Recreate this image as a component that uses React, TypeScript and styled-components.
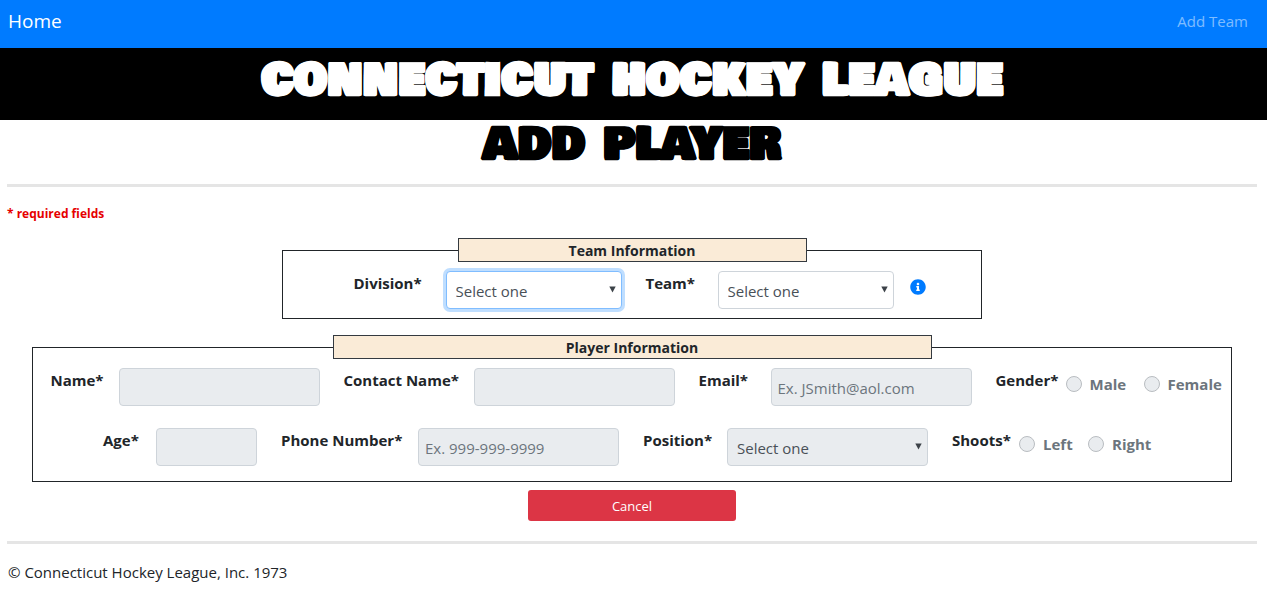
import React from "react";
import styled, { createGlobalStyle, css } from "styled-components";

const GlobalStyle = createGlobalStyle`
  *, *::before, *::after { box-sizing: border-box; }
  body {
    margin: 0;
    background: #fff;
    color: #212529;
    font-family: "Segoe UI", "Open Sans", "Noto Sans", sans-serif;
    font-size: 15px;
    line-height: 24px;
  }
`;

const NavBar = styled.nav`
  display: flex;
  align-items: center;
  justify-content: space-between;
  height: 48px;
  padding: 0 19px 6px 8px;
  background: #007bff;
`;

const Brand = styled.a`
  color: #fff;
  font-size: 19px;
  text-decoration: none;
`;

const NavLink = styled.a`
  color: rgba(255, 255, 255, 0.5);
  text-decoration: none;
`;

const slab = css`
  margin: 0;
  display: flex;
  justify-content: center;
  gap: 18px;
  font-family: "Bowlby One SC", "DejaVu Serif", serif;
  font-size: 42px;
  font-weight: 700;
  line-height: 48px;
  text-transform: uppercase;
  -webkit-text-stroke: 1px currentColor;
`;

const Banner = styled.header`
  height: 72px;
  padding: 8px 3px 0 0;
  background: #000;
  color: #fff;
`;

const SiteTitle = styled.h1`
  ${slab}
`;

const PageTitle = styled.h2`
  ${slab}
  height: 64px;
  color: #000;
`;

const Word = styled.span`
  &::first-letter {
    font-size: 43px;
  }
`;

const Main = styled.main`
  padding: 0 10px 0 7px;
`;

const Rule = styled.hr`
  height: 3px;
  margin: 0;
  border: 0;
  background: #e5e5e5;
`;

const Required = styled.p`
  margin: 17px 0 14px;
  color: #e60000;
  font-size: 12px;
  font-weight: 700;
  line-height: 20px;
`;

const Panel = styled.fieldset<{ $width: number }>`
  width: 100%;
  max-width: ${(p) => p.$width}px;
  min-width: 0;
  margin: 0 auto 16px;
  padding: 9px 0;
  border: 1px solid #212529;
`;

const PanelTitle = styled.legend`
  width: 50%;
  height: 24px;
  margin: 0 auto;
  padding: 0;
  border: 1px solid #343a40;
  background: #faebd7;
  font-size: 14px;
  font-weight: 700;
  line-height: 23px;
  text-align: center;
`;

const Row = styled.div<{ $before?: number; $after?: number }>`
  display: flex;
  justify-content: center;
  gap: 24px;
  padding-left: ${(p) => p.$before ?? 0}px;
  padding-right: ${(p) => p.$after ?? 0}px;
`;

const Rows = styled.div`
  display: grid;
  gap: 22px;
  padding-bottom: 6px;
`;

const Field = styled.div<{ $gap?: number }>`
  display: flex;
  gap: ${(p) => p.$gap ?? 16}px;
`;

const FieldLabel = styled.label<{ $width: number }>`
  width: ${(p) => p.$width}px;
  font-weight: 700;
  white-space: nowrap;
`;

const box = css`
  height: 38px;
  border: 1px solid #ced4da;
  border-radius: 4px;
  background: #fff;
  color: #495057;
  font: inherit;
  opacity: 1;
  &:disabled {
    background: #e9ecef;
  }
  &:focus {
    outline: 0;
    border-color: #80bdff;
    box-shadow: 0 0 0 3px #bfdeff;
  }
`;

const TextBox = styled.input<{ $width: number }>`
  ${box}
  width: ${(p) => p.$width}px;
  padding: 1px 6px 0;
  &::placeholder {
    color: #6c757d;
    opacity: 1;
  }
`;

const SelectWrap = styled.div<{ $width: number }>`
  position: relative;
  width: ${(p) => p.$width}px;
`;

const SelectBox = styled.select`
  ${box}
  display: block;
  width: 100%;
  padding: 1px 24px 0 9px;
  appearance: none;
`;

const Arrow = styled.svg`
  position: absolute;
  right: 6px;
  top: 15px;
  pointer-events: none;
`;

const InfoIcon = styled.svg`
  margin: 8px 31px 0 -8px;
`;

const Choices = styled.div<{ $gap: number }>`
  display: flex;
  gap: ${(p) => p.$gap}px;
  padding-top: 4px;
`;

const Choice = styled.label<{ $width: number }>`
  display: flex;
  align-items: center;
  gap: 8px;
  width: ${(p) => p.$width}px;
  height: 24px;
  color: #6c757d;
  font-weight: 700;
`;

const Radio = styled.input`
  appearance: none;
  flex: none;
  width: 16px;
  height: 16px;
  margin: 0;
  border: 1px solid #b9bdc1;
  border-radius: 50%;
  background: #e9ecef;
`;

const CancelButton = styled.button`
  display: block;
  width: 208px;
  height: 31px;
  margin: -8px auto 20px;
  padding: 0;
  border: 0;
  border-radius: 3px;
  background: #dc3545;
  color: #fff;
  font: inherit;
  font-size: 13px;
`;

const Footer = styled.footer`
  padding: 16px 1px 8px;
`;

function Words({ text }: { text: string }) {
  return (
    <>
      {text.split(" ").map((word) => (
        <Word key={word}>{word}</Word>
      ))}
    </>
  );
}

type SelectProps = { id: string; width: number; disabled?: boolean; autoFocus?: boolean };

function Select({ id, width, disabled, autoFocus }: SelectProps) {
  return (
    <SelectWrap $width={width}>
      <SelectBox id={id} disabled={disabled} autoFocus={autoFocus}>
        <option>Select one</option>
      </SelectBox>
      <Arrow width="7" height="7" viewBox="0 0 7 7" aria-hidden="true">
        <path d="M0.3 0.5h6.4L3.5 6.5z" fill="#3c4248" />
      </Arrow>
    </SelectWrap>
  );
}

type InputProps = { id: string; label: string; labelWidth: number; width?: number; placeholder?: string };

function TextField({ id, label, labelWidth, width = 201, placeholder }: InputProps) {
  return (
    <Field>
      <FieldLabel htmlFor={id} $width={labelWidth}>{label}</FieldLabel>
      <TextBox id={id} $width={width} placeholder={placeholder} disabled />
    </Field>
  );
}

export default function App() {
  return (
    <>
      <GlobalStyle />
      <NavBar>
        <Brand href="#home">Home</Brand>
        <NavLink href="#add-team">Add Team</NavLink>
      </NavBar>
      <Banner>
        <SiteTitle><Words text="Connecticut Hockey League" /></SiteTitle>
      </Banner>
      <Main>
        <PageTitle><Words text="Add Player" /></PageTitle>
        <Rule />
        <Required>* required fields</Required>
        <form>
          <Panel $width={700}>
            <PanelTitle>Team Information</PanelTitle>
            <Row $before={46}>
              <Field $gap={24}>
                <FieldLabel htmlFor="division" $width={68}>Division*</FieldLabel>
                <Select id="division" width={176} autoFocus />
              </Field>
              <Field $gap={24}>
                <FieldLabel htmlFor="team" $width={48}>Team*</FieldLabel>
                <Select id="team" width={176} />
              </Field>
              <InfoIcon width="16" height="16" viewBox="0 0 512 512" role="img" aria-label="Team help">
                <path
                  fill="#007bff"
                  d="M256 8C119.043 8 8 119.083 8 256c0 136.997 111.043 248 248 248s248-111.003 248-248C504 119.083 392.957 8 256 8zm0 110c23.196 0 42 18.804 42 42s-18.804 42-42 42-42-18.804-42-42 18.804-42 42-42zm56 254c0 6.627-5.373 12-12 12h-88c-6.627 0-12-5.373-12-12v-24c0-6.627 5.373-12 12-12h12v-64h-12c-6.627 0-12-5.373-12-12v-24c0-6.627 5.373-12 12-12h64c6.627 0 12 5.373 12 12v100h12c6.627 0 12 5.373 12 12v24z"
                />
              </InfoIcon>
            </Row>
          </Panel>
          <Panel $width={1200}>
            <PanelTitle>Player Information</PanelTitle>
            <Rows>
              <Row $before={8}>
                <TextField id="name" label="Name*" labelWidth={52} />
                <TextField id="contact" label="Contact Name*" labelWidth={114} />
                <TextField id="email" label="Email*" labelWidth={56} placeholder="Ex. JSmith@aol.com" />
                <Field $gap={8} role="radiogroup" aria-labelledby="gender">
                  <FieldLabel as="span" id="gender" $width={62}>Gender*</FieldLabel>
                  <Choices $gap={16}>
                    <Choice $width={62}><Radio type="radio" name="gender" disabled />Male</Choice>
                    <Choice $width={78}><Radio type="radio" name="gender" disabled />Female</Choice>
                  </Choices>
                </Field>
              </Row>
              <Row $after={8}>
                <TextField id="age" label="Age*" labelWidth={37} width={101} />
                <TextField id="phone" label="Phone Number*" labelWidth={121} placeholder="Ex. 999-999-9999" />
                <Field>
                  <FieldLabel htmlFor="position" $width={68}>Position*</FieldLabel>
                  <Select id="position" width={201} disabled />
                </Field>
                <Field $gap={8} role="radiogroup" aria-labelledby="shoots">
                  <FieldLabel as="span" id="shoots" $width={59}>Shoots*</FieldLabel>
                  <Choices $gap={16}>
                    <Choice $width={53}><Radio type="radio" name="shoots" disabled />Left</Choice>
                    <Choice $width={65}><Radio type="radio" name="shoots" disabled />Right</Choice>
                  </Choices>
                </Field>
              </Row>
            </Rows>
          </Panel>
          <CancelButton type="button">Cancel</CancelButton>
        </form>
        <Rule />
        <Footer>© Connecticut Hockey League, Inc. 1973</Footer>
      </Main>
    </>
  );
}
